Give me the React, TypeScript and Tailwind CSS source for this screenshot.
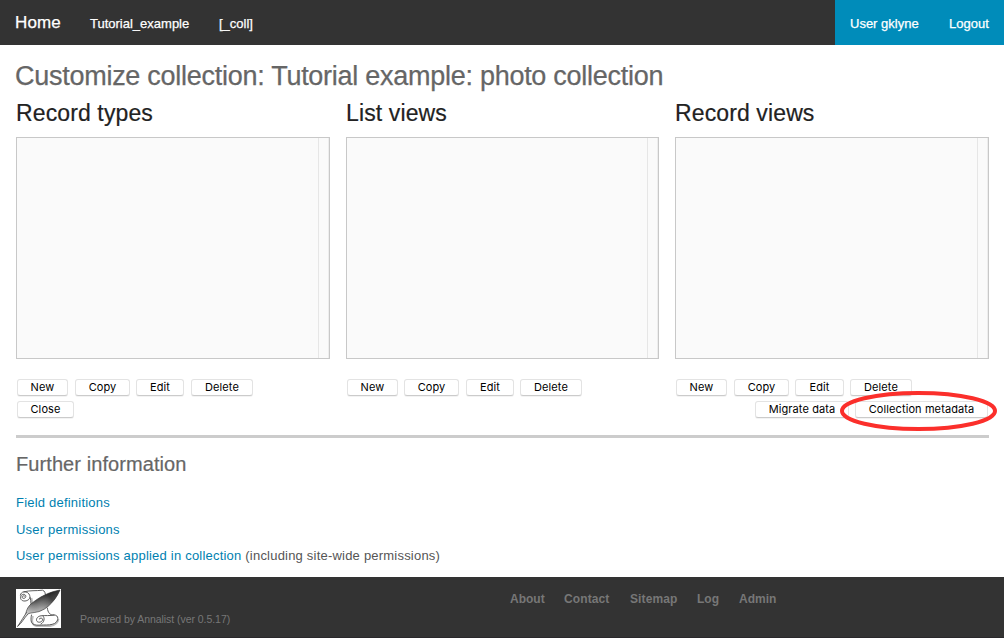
import React from "react";

type ButtonSpec = { label: string; box: string };

function MacButton({ label, box }: ButtonSpec) {
  return (
    <button
      className={`flex h-[17px] shrink-0 items-center justify-center rounded-[3px] border border-[#e3e3e3] border-b-[#cbcbcb] bg-white pb-px font-['Inter',sans-serif] text-[11px] leading-none tracking-[0.1px] whitespace-nowrap text-black shadow-[0_1px_0_#f3f3f3] ${box}`}
    >
      {label}
    </button>
  );
}

type ColumnSpec = { title: string; width: string; buttons: ButtonSpec[] };

const columns: ColumnSpec[] = [
  {
    title: "Record types",
    width: "w-[314px]",
    buttons: [
      { label: "New", box: "ml-px w-[51px]" },
      { label: "Copy", box: "ml-[7px] w-[55px]" },
      { label: "Edit", box: "ml-[6px] w-[48px]" },
      { label: "Delete", box: "ml-[7px] w-[62px]" },
    ],
  },
  {
    title: "List views",
    width: "w-[313px]",
    buttons: [
      { label: "New", box: "ml-px w-[51px]" },
      { label: "Copy", box: "ml-[6px] w-[55px]" },
      { label: "Edit", box: "ml-[7px] w-[48px]" },
      { label: "Delete", box: "ml-[6px] w-[62px]" },
    ],
  },
  {
    title: "Record views",
    width: "w-[314px]",
    buttons: [
      { label: "New", box: "ml-px w-[51px]" },
      { label: "Copy", box: "ml-[7px] w-[55px]" },
      { label: "Edit", box: "ml-[6px] w-[49px]" },
      { label: "Delete", box: "ml-[6px] w-[62px]" },
    ],
  },
];

function Column({ title, width, buttons }: ColumnSpec) {
  return (
    <section className={`shrink-0 ${width}`}>
      <h3 className="h-[40px] text-[23px] leading-[32px] tracking-[0.12px] whitespace-nowrap text-[#222] [-webkit-text-stroke:0.2px_#222]">
        {title}
      </h3>
      <div className="flex h-[222px] justify-end border border-[#c8c8c8] bg-[#fafafa]">
        <div className="w-[11px] border-r border-l border-r-[#ededed] border-l-[#e6e6e6]" />
      </div>
      <div className="mt-5 flex">
        {buttons.map((b) => (
          <MacButton key={b.label} {...b} />
        ))}
      </div>
    </section>
  );
}

function Logo() {
  return (
    <svg className="block h-[39px] w-[45px] bg-white" viewBox="0 0 45 39" fill="none">
      <defs>
        <linearGradient id="quill" x1="26" y1="7" x2="31" y2="17" gradientUnits="userSpaceOnUse">
          <stop offset="0" stopColor="#2c2c2c" />
          <stop offset="0.45" stopColor="#777" />
          <stop offset="1" stopColor="#b5b5b5" />
        </linearGradient>
        <linearGradient id="shade" x1="34" y1="8" x2="10" y2="24" gradientUnits="userSpaceOnUse">
          <stop offset="0" stopColor="#222" stopOpacity="0.7" />
          <stop offset="0.5" stopColor="#777" stopOpacity="0.2" />
          <stop offset="1" stopColor="#fff" stopOpacity="0.6" />
        </linearGradient>
      </defs>
      <g stroke="#bdbdbd" strokeWidth="1.8">
        <path d="M15.500 9c1.200 5 1 9 .5 14M17 27c-1.500 5-1 9 3 10h14c5-.5 8-3 8.500-7" />
      </g>
      <g stroke="#4a4a4a" strokeWidth="0.9" strokeLinecap="round">
        <path d="M8.500 7c-1.800-.8-3 .6-2.200 1.800 1 1.200 3.400.5 3.500-1.300.1-2.500-3.300-3-4.800-.8C3.500 9.500 5.500 12.300 9 12c3.300-.3 5.600-2.500 4.700-5.500C13 4 11 2.800 8 2.800 6 3 4.800 4.300 4.400 6" />
        <path d="M8 2.800C14 1.200 20 2 26.500 1.200c2.300.6 3 3 3 6" />
        <path d="M14.200 8.500c1 4 .9 8 .4 12M15.500 26c-.8 4-1.200 8.500 3 9.800 3 .7 6 .2 9 .2 4 0 8 0 11-1.500 4.500-2.500 4.500-8.500-.5-8.500-4 .2-6-2-6.700-7" />
        <path d="M38 26c-4 1-9 .3-13 .8-3 .4-5 2.500-4.400 4.800.8 2.500 5.400 2 6-.8.200-2-2.500-2.300-3.400-.8M27 27c2 2 1.500 6-2 8" />
      </g>
      <g>
        <path d="M44 1C33 3 23 8 15 15c-4 3.500-4.500 7-5.500 10.500 6-2.500 13-1.500 17-4.500 3-1 4-3 6-4C37 13 41 8 44 1Z" fill="url(#quill)" />
        <path d="M44 1C33 3 23 8 15 15c-4 3.500-4.500 7-5.500 10.500 6-2.500 13-1.500 17-4.500 3-1 4-3 6-4C37 13 41 8 44 1Z" fill="url(#shade)" stroke="#333" strokeWidth="0.6" />
      </g>
      <path d="M11 23C8 27 6 31 1.500 37.500 6 34 8 29 12 25" fill="#ddd" stroke="#444" strokeWidth="0.8" />
    </svg>
  );
}

export default function App() {
  return (
    <div className="relative flex h-[638px] w-[1004px] flex-col overflow-hidden bg-white font-['Liberation_Sans',Arial,sans-serif]">
      <nav className="flex h-[45px] shrink-0 bg-[#333] text-[13px] leading-[45px] whitespace-nowrap text-white [-webkit-text-stroke:0.25px_white]">
        <a className="ml-[15px] w-[75px] text-[17px] tracking-[0.15px]">Home</a>
        <a className="w-[129px] pt-px">Tutorial_example</a>
        <a className="pt-px">[_coll]</a>
        <div className="ml-auto flex w-[169px] bg-[#008cba] pt-px pl-[15px]">
          <a className="w-[99px]">User gklyne</a>
          <a>Logout</a>
        </div>
      </nav>

      <main className="flex flex-col px-4">
        <h2 className="-ml-px h-[52px] pt-3 text-[27px] leading-[38px] tracking-[-0.27px] whitespace-nowrap text-[#666] [-webkit-text-stroke:0.25px_#666]">
          Customize collection: Tutorial example: photo collection
        </h2>
        <div className="flex gap-4">
          {columns.map((c) => (
            <Column key={c.title} {...c} />
          ))}
        </div>
        <div className="mt-[5px] flex w-[973px] pl-px">
          <MacButton label="Close" box="w-[57px]" />
          <MacButton label="Migrate data" box="ml-auto w-[94px]" />
          <MacButton label="Collection metadata" box="ml-[6px] mr-px w-[133px]" />
        </div>
        <hr className="mt-[17px] h-[3px] w-[973px] border-0 bg-[#ccc]" />
        <h3 className="mt-[12px] text-[20px] leading-[28px] tracking-[0.08px] text-[#666] [-webkit-text-stroke:0.2px_#666]">
          Further information
        </h3>
        <div className="mt-[11px] flex flex-col text-[13px] leading-[27px] tracking-[0.21px] text-[#555]">
          <a className="text-[#007fb0]">Field definitions</a>
          <a className="text-[#007fb0]">User permissions</a>
          <p className="-mt-px">
            <a className="text-[#007fb0]">User permissions applied in collection</a> (including site-wide permissions)
          </p>
        </div>
      </main>

      <footer className="mt-auto flex h-[61px] shrink-0 border-b border-[#2a282b] bg-[#333] pt-3 pl-4 text-[#777]">
        <Logo />
        <p className="mt-[22px] ml-[19px] w-[430px] text-[10.5px] leading-4 tracking-[-0.05px]">
          Powered by Annalist (ver 0.5.17)
        </p>
        <div className="flex text-[12px] leading-5 font-bold">
          <a className="w-[54px]">About</a>
          <a className="w-[66px] tracking-[0.1px]">Contact</a>
          <a className="w-[67px] tracking-[0.1px]">Sitemap</a>
          <a className="w-[42px]">Log</a>
          <a>Admin</a>
        </div>
      </footer>

      <svg className="pointer-events-none absolute top-[388px] left-[836px] h-[46px] w-[166px]" viewBox="0 0 166 46" fill="none">
        <ellipse cx="82.500" cy="23" rx="76.500" ry="18" stroke="#fb2f2b" strokeWidth="4" />
      </svg>
    </div>
  );
}
